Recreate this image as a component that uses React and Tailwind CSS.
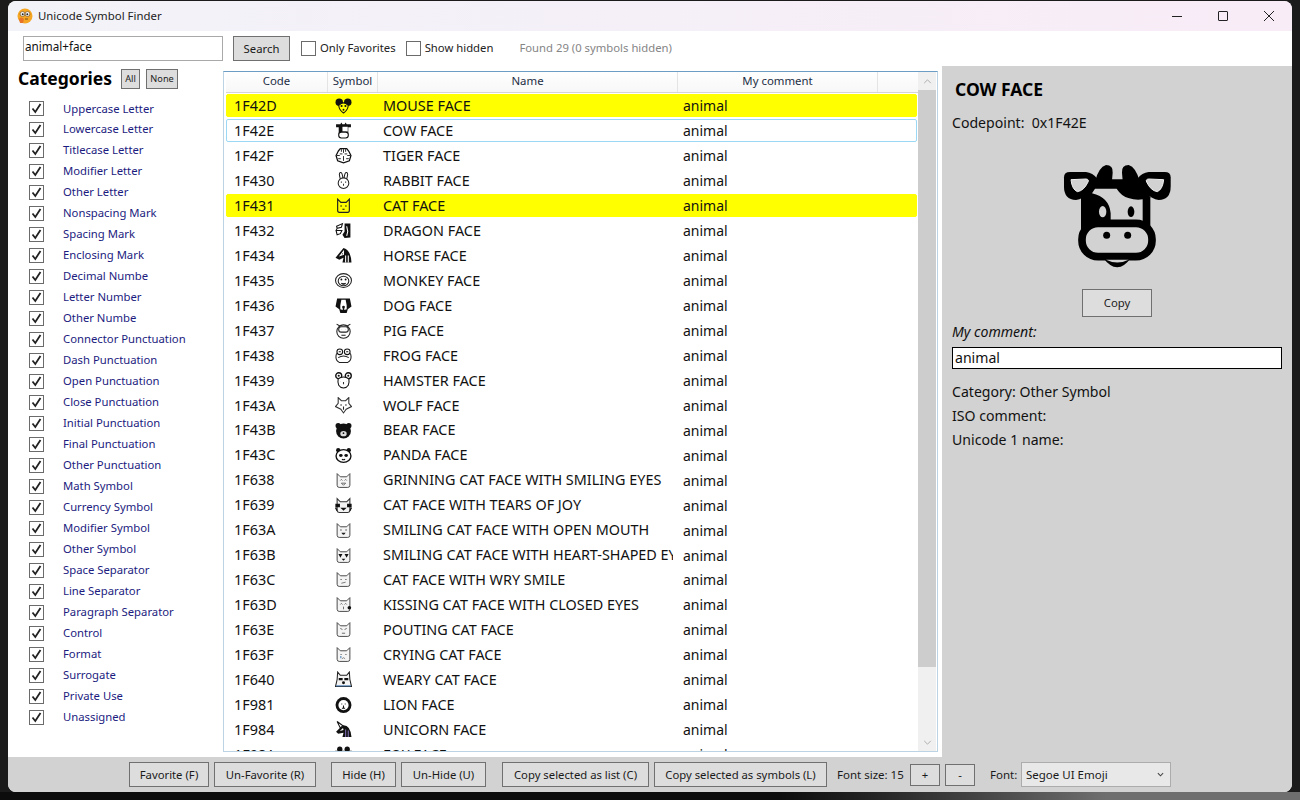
import React from "react";

const UI = { fontFamily: '"Noto Sans", "Open Sans", sans-serif' };

const categories = [
  "Uppercase Letter", "Lowercase Letter", "Titlecase Letter", "Modifier Letter", "Other Letter",
  "Nonspacing Mark", "Spacing Mark", "Enclosing Mark", "Decimal Numbe", "Letter Number", "Other Numbe",
  "Connector Punctuation", "Dash Punctuation", "Open Punctuation", "Close Punctuation", "Initial Punctuation",
  "Final Punctuation", "Other Punctuation", "Math Symbol", "Currency Symbol", "Modifier Symbol", "Other Symbol",
  "Space Separator", "Line Separator", "Paragraph Separator", "Control", "Format", "Surrogate", "Private Use", "Unassigned",
];

const rows = [
  ["1F42D", "MOUSE FACE", "mouse", "hl"],
  ["1F42E", "COW FACE", "cow", "sel"],
  ["1F42F", "TIGER FACE", "tiger"],
  ["1F430", "RABBIT FACE", "rabbit"],
  ["1F431", "CAT FACE", "cat", "hl"],
  ["1F432", "DRAGON FACE", "dragon"],
  ["1F434", "HORSE FACE", "horse"],
  ["1F435", "MONKEY FACE", "monkey"],
  ["1F436", "DOG FACE", "dog"],
  ["1F437", "PIG FACE", "pig"],
  ["1F438", "FROG FACE", "frog"],
  ["1F439", "HAMSTER FACE", "hamster"],
  ["1F43A", "WOLF FACE", "wolf"],
  ["1F43B", "BEAR FACE", "bear"],
  ["1F43C", "PANDA FACE", "panda"],
  ["1F638", "GRINNING CAT FACE WITH SMILING EYES", "catGrin"],
  ["1F639", "CAT FACE WITH TEARS OF JOY", "catJoy"],
  ["1F63A", "SMILING CAT FACE WITH OPEN MOUTH", "catOpen"],
  ["1F63B", "SMILING CAT FACE WITH HEART-SHAPED EYES", "catHeart"],
  ["1F63C", "CAT FACE WITH WRY SMILE", "catWry"],
  ["1F63D", "KISSING CAT FACE WITH CLOSED EYES", "catKiss"],
  ["1F63E", "POUTING CAT FACE", "catPout"],
  ["1F63F", "CRYING CAT FACE", "catCry"],
  ["1F640", "WEARY CAT FACE", "catWeary"],
  ["1F981", "LION FACE", "lion"],
  ["1F984", "UNICORN FACE", "unicorn"],
  ["1F98A", "FOX FACE", "fox"],
];

// outline shared by the 1F638..1F640 cats
const CatBase = () => (
  <path d="M2 1.5 5 4.5H11L14 1.5V12.5Q14 14.5 12 14.5H4Q2 14.5 2 12.5Z" fill="#f4f4f4" stroke="#444" strokeWidth="0.9" />
);

const glyphs = {
  mouse: (
    <>
      <circle cx="4" cy="5" r="3.5" fill="#111" />
      <circle cx="12" cy="5" r="3.5" fill="#111" />
      <path d="M3.5 8Q8 3 12.5 8 12 12.5 8 15 4 12.5 3.5 8Z" fill="#ff0" stroke="#111" />
      <circle cx="6.2" cy="8.5" r="1" fill="#111" />
      <circle cx="9.8" cy="8.5" r="1" fill="#111" />
      <circle cx="8" cy="12" r="0.9" fill="#111" />
    </>
  ),
  cow: (
    <>
      <path d="M1 2H5L6 0.5 7 2H9L10 0.5 11 2H15V5H12.5V13H3.5V5H1Z" fill="#111" />
      <rect x="7" y="4.5" width="5" height="4.5" fill="#fff" />
      <rect x="3.5" y="9.5" width="9" height="5.5" rx="2.5" fill="#fff" stroke="#111" />
      <path d="M6.5 12H6.6M9.5 12H9.6" stroke="#111" />
    </>
  ),
  tiger: (
    <>
      <path d="M3 4 5 1.5H11L13 4 15 8 13.5 13 8 15 2.5 13 1 8Z" fill="#fff" stroke="#111" strokeWidth="1.2" />
      <path d="M6 2V4.5M8 2V5.5M10 2V4.5M1.5 8H4.5M11.5 8H14.5M3 11H5.5M10.5 11H13M8 8.5V13M4.5 6.5H7M9 6.5H11.5" stroke="#222" strokeWidth="0.9" />
    </>
  ),
  rabbit: (
    <>
      <path d="M5.5 8Q3 1 5 0.5T7.5 6.5M10.5 8Q13 1 11 0.5T8.5 6.5" fill="#fff" stroke="#222" />
      <circle cx="8" cy="10.5" r="5" fill="#fff" stroke="#222" />
      <path d="M8 11V13M5.5 9.5H6.5M9.5 9.5H10.5" stroke="#333" />
    </>
  ),
  cat: (
    <>
      <path d="M2.5 2 5.5 5H10.5L13.5 2V12.5Q13.5 14.5 12 14.5H4Q2.5 14.5 2.5 12.5Z" fill="#ff0" stroke="#222" strokeWidth="1.1" />
      <path d="M5 8.5H6.5M9.5 8.5H11M7 11.5H9" stroke="#111" />
    </>
  ),
  dragon: (
    <>
      <path d="M9 1.5H14.5V14.5L9 15 7 12 9 9Z" fill="#111" />
      <path d="M1.5 4 7 1.5 6 5 2 6ZM1 8H6.5L5 11 2 12ZM2 6 1 8" fill="#fff" stroke="#111" />
      <path d="M11 4 12 9 11 13" stroke="#fff" fill="none" />
    </>
  ),
  horse: (
    <>
      <path d="M8 1Q15 3 15.5 14.5H7L8 10 4 12 0.5 10Z" fill="#111" />
      <path d="M8 4 5 8 8 7ZM10 8V14.5M12.5 8V14.5" stroke="#fff" fill="none" />
    </>
  ),
  monkey: (
    <>
      <ellipse cx="8" cy="8" rx="7.5" ry="6.5" fill="#fff" stroke="#222" />
      <ellipse cx="8" cy="8.5" rx="5" ry="4.5" fill="#fff" stroke="#222" />
      <circle cx="6" cy="7" r="0.9" fill="#111" />
      <circle cx="10" cy="7" r="0.9" fill="#111" />
      <path d="M6 10.5Q8 12.5 10 10.5" fill="#111" stroke="#111" />
    </>
  ),
  dog: (
    <>
      <path d="M2 1.5H14L15.5 9 12 11.5 11 15H5L4 11.5 0.5 9Z" fill="#111" />
      <path d="M6 2.5H10L11 8V11.5L8 12.5 5 11.5V8Z" fill="#fff" />
      <circle cx="8" cy="9.5" r="1.3" fill="#111" />
      <path d="M8 10V15" stroke="#111" strokeWidth="1.5" />
    </>
  ),
  pig: (
    <>
      <circle cx="8" cy="9" r="6.3" fill="#fff" stroke="#222" />
      <path d="M1.5 2 5 4M14.5 2 11 4" stroke="#222" />
      <rect x="3.5" y="4.5" width="9" height="5" rx="2.3" fill="#fff" stroke="#222" />
      <path d="M6.5 7H6.6M9.5 7H9.6M6 12.5H10" stroke="#222" />
    </>
  ),
  frog: (
    <>
      <path d="M1.5 6Q-0.5 12 4 14.5H12Q16.5 12 14.5 6" fill="#fff" stroke="#222" />
      <circle cx="4.5" cy="4.5" r="2.7" fill="#fff" stroke="#111" />
      <circle cx="11.5" cy="4.5" r="2.7" fill="#fff" stroke="#111" />
      <path d="M3.5 4.5H5.5M10.5 4.5H12.5" stroke="#111" />
      <path d="M3 10Q8 7 13 10" fill="none" stroke="#222" />
    </>
  ),
  hamster: (
    <>
      <circle cx="3.5" cy="3.5" r="2.8" fill="#fff" stroke="#111" strokeWidth="1.3" />
      <circle cx="12.5" cy="3.5" r="2.8" fill="#fff" stroke="#111" strokeWidth="1.3" />
      <circle cx="3.5" cy="3.5" r="1" fill="#111" />
      <circle cx="12.5" cy="3.5" r="1" fill="#111" />
      <path d="M3 6.5Q1.5 14 8 15 14.5 14 13 6.5Q8 3 3 6.5Z" fill="#fff" stroke="#111" />
      <path d="M8 9.5V11.5M5.5 9H5.6M10.5 9H10.6" stroke="#333" />
    </>
  ),
  wolf: (
    <>
      <path d="M3 0.5 6 3.5H10L13 0.5V6L15.5 9 10.5 11.5 8 15 5.5 11.5 0.5 9 3 6Z" fill="#fff" stroke="#333" />
      <path d="M5 7.5H6.5M9.5 7.5H11M8 9V12" stroke="#222" />
    </>
  ),
  bear: (
    <>
      <circle cx="3" cy="3.5" r="2.5" fill="#111" />
      <circle cx="13" cy="3.5" r="2.5" fill="#111" />
      <circle cx="8" cy="8.5" r="7" fill="#111" />
      <ellipse cx="8" cy="11" rx="3" ry="2.5" fill="#ddd" />
      <circle cx="8" cy="10.5" r="0.8" fill="#111" />
    </>
  ),
  panda: (
    <>
      <circle cx="3" cy="3" r="2" fill="#111" />
      <circle cx="13" cy="3" r="2" fill="#111" />
      <ellipse cx="8" cy="8.5" rx="7" ry="6" fill="#fff" stroke="#111" strokeWidth="1.3" />
      <ellipse cx="5.5" cy="8" rx="1.7" ry="1.4" fill="#111" />
      <ellipse cx="10.5" cy="8" rx="1.7" ry="1.4" fill="#111" />
      <path d="M6.5 11.5Q8 12.5 9.5 11.5" fill="none" stroke="#111" />
    </>
  ),
  catGrin: (
    <>
      <CatBase />
      <path d="M5 8 6 7 7 8M9 8 10 7 11 8M6 10.5H10L8 12.5Z" fill="none" stroke="#555" strokeWidth="0.8" />
    </>
  ),
  catJoy: (
    <>
      <path d="M2 1.5 5 4.5H11L14 1.5V13Q14 14.5 12 14.5H4Q2 14.5 2 13Z" fill="#f4f4f4" stroke="#333" />
      <path d="M1 7H4V9H1ZM12 7H15V9H12ZM0.5 10 2 13M15.5 10 14 13" stroke="#111" strokeWidth="1.3" />
      <path d="M5 10H11L8 13Z" fill="#111" />
    </>
  ),
  catOpen: (
    <>
      <CatBase />
      <path d="M5 7.5H6.2M9.8 7.5H11" stroke="#222" strokeWidth="1.1" />
      <path d="M6 10H10Q8 14 6 10Z" fill="#222" />
    </>
  ),
  catHeart: (
    <>
      <CatBase />
      <path d="M3.2 6.5H7L5.1 10ZM9 6.5H12.8L10.9 10ZM6.2 11H9.8L8 13Z" fill="#111" />
    </>
  ),
  catWry: (
    <>
      <CatBase />
      <path d="M5 8H6.5M9.5 8H11M6 11.5 10 10.5" fill="none" stroke="#666" strokeWidth="0.8" />
    </>
  ),
  catKiss: (
    <>
      <CatBase />
      <path d="M5 8 6 7 7 8M9 8 10 7 11 8M8 10V12.5" fill="none" stroke="#555" strokeWidth="0.8" />
      <circle cx="13.5" cy="11" r="1.7" fill="#111" />
    </>
  ),
  catPout: (
    <>
      <CatBase />
      <path d="M5 7 7 8M11 7 9 8M6.5 11.5H9.5" fill="none" stroke="#555" strokeWidth="0.8" />
    </>
  ),
  catCry: (
    <>
      <CatBase />
      <path d="M5 8H6.5M9.5 8H11M6.5 12 8 11 9.5 12" fill="none" stroke="#777" strokeWidth="0.8" />
      <path d="M5.5 9.5V11.5" stroke="#4a7fb5" strokeWidth="1" />
    </>
  ),
  catWeary: (
    <>
      <path d="M2.5 1 5 4H11L13.5 1 14 8 15.5 14.5H0.5L2 8Z" fill="#f4f4f4" stroke="#222" />
      <path d="M3.5 6.5H7.2V8.8H3.5ZM8.8 6.5H12.5V8.8H8.8Z" fill="#111" />
      <circle cx="8" cy="11" r="1.4" fill="#111" />
      <path d="M1 14H15" stroke="#4a7fb5" strokeWidth="1" />
    </>
  ),
  lion: (
    <>
      <circle cx="8" cy="8.5" r="7.5" fill="#111" />
      <circle cx="8" cy="8.5" r="4.8" fill="#fff" />
      <path d="M6 7.5H6.8M9.2 7.5H10M8 9V11.5M6.5 11.5H9.5" stroke="#111" />
    </>
  ),
  unicorn: (
    <>
      <path d="M8 4Q14.5 4 15.5 15H7L8 11 3 12 1 10 5 6Z" fill="#111" />
      <path d="M2 0.5 7.5 4.5 5 6.5Z" fill="#fff" stroke="#111" />
      <path d="M7.5 6.5 4.5 9.5 8 8.5Z" fill="#fff" />
      <path d="M10 8V15M12.5 9V15" stroke="#7d6bb0" fill="none" />
    </>
  ),
  fox: (
    <>
      <circle cx="4.5" cy="3" r="2.5" fill="#111" />
      <circle cx="11.5" cy="3" r="2.5" fill="#111" />
      <path d="M1 5H15L8 15Z" fill="#fff" stroke="#111" />
    </>
  ),
};

const Glyph = ({ name }) => (
  <svg viewBox="0 0 16 16" className="w-[17px] h-[17px] block" strokeWidth="1">
    {glyphs[name]}
  </svg>
);

const CheckBox = ({ checked }) => (
  <div className="w-[15px] h-[15px] bg-white border border-[#6b6b6b] flex items-center justify-center shrink-0">
    {checked && (
      <svg viewBox="0 0 13 13" className="w-[13px] h-[13px]">
        <path d="M2.5 6.5 5.3 10 10.5 2" fill="none" stroke="#222" strokeWidth="1.8" />
      </svg>
    )}
  </div>
);

const BarButton = ({ children, className }) => (
  <button className={`h-[25px] pt-px bg-[#dddddd] border border-[#707070] text-[11.3px] text-[#1a1a1a] flex items-center justify-center ${className}`}>
    {children}
  </button>
);

const CowIcon = () => (
  <svg viewBox="0 0 345 345" className="w-[115px] h-[115px] block">
    {/* horns */}
    <path d="M106 62Q116 22 138 15 160 15 158 38L156 62ZM238 62Q228 22 206 15 184 15 186 38L188 62Z" fill="#000" />
    {/* ears */}
    <path d="M12 52Q12 36 30 36H78Q98 38 112 56 90 112 48 120 12 118 12 80Z" fill="#000" />
    <path d="M332 52Q332 36 314 36H266Q246 38 232 56 254 112 296 120 332 118 332 80Z" fill="#000" />
    <path d="M33 59 78 57Q88 58 84 66 72 92 52 95 36 88 33 59Z" fill="#d2d2d2" stroke="#efefef" strokeWidth="3" />
    <path d="M311 59 266 57Q256 58 260 66 272 92 292 95 308 88 311 59Z" fill="#d2d2d2" stroke="#efefef" strokeWidth="3" />
    {/* head */}
    <path d="M63 112 108 58H237L271 112V212H63Z" fill="#000" />
    <path d="M105 86H170Q184 108 205 114 228 122 248 118V195H152V160Q148 112 96 100Z" fill="#d2d2d2" />
    {/* eyes */}
    <ellipse cx="128" cy="155" rx="11" ry="17" fill="#d2d2d2" />
    <ellipse cx="213" cy="155" rx="10" ry="16" fill="#000" />
    {/* muzzle */}
    <path d="M128 292Q172 352 214 292Z" fill="#000" />
    <rect x="66" y="190" width="210" height="100" rx="48" fill="#d2d2d2" stroke="#000" strokeWidth="23" />
    <path d="M138 299H206Q172 316 138 299Z" fill="#d2d2d2" />
    <circle cx="140" cy="226" r="10.5" fill="#000" />
    <circle cx="203" cy="226" r="10.5" fill="#000" />
  </svg>
);

const AppIcon = () => (
  <svg viewBox="0 0 16 16" className="w-[16px] h-[16px] block">
    <circle cx="8" cy="8" r="7.5" fill="#f5a623" />
    <circle cx="5.5" cy="6" r="2.4" fill="#fff" stroke="#5a3a10" strokeWidth="0.6" />
    <circle cx="10.5" cy="6" r="2.4" fill="#fff" stroke="#5a3a10" strokeWidth="0.6" />
    <circle cx="5.7" cy="6.2" r="1" fill="#222" />
    <circle cx="10.3" cy="6.2" r="1" fill="#222" />
    <path d="M2 11Q4 8 7 11L6 15H3Z" fill="#e8742a" />
    <path d="M8 11H11" stroke="#5a3a10" strokeWidth="0.8" />
  </svg>
);

export default function App() {
  return (
    <div className="w-[1300px] h-[800px] overflow-hidden flex flex-col bg-[#1b1b1b]" style={UI}>
      <div className="h-[792px] pt-px px-2 flex">
        <div className="flex-1 flex flex-col rounded-lg overflow-hidden bg-white">
          {/* title bar */}
          <div className="h-[30px] shrink-0 flex items-center bg-gradient-to-r from-[#f2f3f8] to-[#f8ecf7]">
            <div className="ml-[9px] mr-[5px]"><AppIcon /></div>
            <span className="text-[11.4px] text-[#222]">Unicode Symbol Finder</span>
            <div className="ml-auto flex items-center">
              <div className="w-[46px] flex justify-center"><div className="w-[10px] h-px bg-[#222]" /></div>
              <div className="w-[46px] flex justify-center"><div className="w-[10px] h-[10px] border border-[#222] rounded-[1px]" /></div>
              <div className="w-[46px] flex justify-center">
                <svg viewBox="0 0 10 10" className="w-[10px] h-[10px]"><path d="M0 0 10 10M10 0 0 10" stroke="#222" strokeWidth="1" /></svg>
              </div>
            </div>
          </div>

          {/* search row */}
          <div className="h-[35px] shrink-0 flex items-start pt-[5px] pl-[15px]">
            <div className="w-[200px] h-[25px] border border-[#a9a9a9] bg-white pl-px text-[11.7px] leading-[18px] text-[#111]">animal+face</div>
            <BarButton className="w-[57px] ml-[10px]">Search</BarButton>
            <div className="h-[25px] flex items-center ml-[11px] text-[11.3px] text-[#222]">
              <CheckBox />
              <span className="ml-[4px]">Only Favorites</span>
              <div className="ml-[10px]"><CheckBox /></div>
              <span className="ml-[4px]">Show hidden</span>
              <span className="ml-[26px] text-[#858585]">Found 29 (0 symbols hidden)</span>
            </div>
          </div>

          <div className="flex-1 flex min-h-0">
            {/* categories */}
            <div className="w-[215px] shrink-0">
              <div className="h-[32.5px] flex items-start pl-[10px] pt-[3px]">
                <span className="text-[17.5px] font-bold text-black leading-[18px]">Categories</span>
                <button className="w-[19px] h-[20px] ml-[9px] bg-[#dddddd] border border-[#707070] text-[9.2px] text-[#222]">All</button>
                <button className="w-[32px] h-[20px] ml-[6px] bg-[#dddddd] border border-[#707070] text-[9.2px] text-[#222]">None</button>
              </div>
              {categories.map((c) => (
                <div key={c} className="h-[20.97px] flex items-center pl-[21px]">
                  <CheckBox checked />
                  <span className="ml-[19px] text-[11.3px] text-[#1c1c80]">{c}</span>
                </div>
              ))}
            </div>

            {/* list */}
            <div className="flex-1 mt-[5px] mb-[5px] mr-[4px] flex border border-[#bcd3e3] border-t-[#6e9dc4] bg-white overflow-hidden">
              <div className="flex-1 min-w-0 flex flex-col">
                <div className="h-[21px] shrink-0 flex text-[11.4px] text-[#1e2e45] bg-gradient-to-b from-white to-[#f7f7f7] border-b border-[#d5d5d5] ml-[2px]">
                  <div className="w-[102px] text-center border-r border-[#e4e4e4]">Code</div>
                  <div className="w-[50px] text-center border-r border-[#e4e4e4]">Symbol</div>
                  <div className="w-[300px] text-center border-r border-[#e4e4e4]">Name</div>
                  <div className="w-[200px] text-center border-r border-[#e4e4e4]">My comment</div>
                </div>
                <div className="flex-1 min-h-0 overflow-hidden ml-[2px] mr-px pt-[0.4px]">
                  {rows.map(([code, name, glyph, state]) => (
                    <div key={code} className="h-[24.96px] flex items-center">
                      <div className={`w-full h-[23px] flex items-center rounded-[2px] border text-[14.4px] text-[#111] ${state === "hl" ? "bg-[#ffff00] border-[#ffff00]" : state === "sel" ? "border-[#9ad8f5]" : "border-transparent"}`}>
                        <div className="w-[101px] pl-[7px] shrink-0">{code}</div>
                        <div className="w-[50px] pl-[7px] shrink-0"><Glyph name={glyph} /></div>
                        <div className="w-[295px] mr-[5px] pl-[5px] shrink-0 overflow-hidden whitespace-nowrap">{name}</div>
                        <div className="pl-[5px] text-[14px]">animal</div>
                      </div>
                    </div>
                  ))}
                </div>
              </div>
              {/* scrollbar */}
              <div className="w-[18px] mr-px shrink-0 flex flex-col bg-[#f0f0f0]">
                <div className="h-[18px] flex items-center justify-center">
                  <svg viewBox="0 0 10 6" className="w-[9px] h-[5px]"><path d="M1 5 5 1 9 5" fill="none" stroke="#a8a8a8" strokeWidth="1.1" /></svg>
                </div>
                <div className="h-[577px] bg-[#cdcdcd]" />
                <div className="flex-1 flex items-end justify-center pb-[6px]">
                  <svg viewBox="0 0 10 6" className="w-[9px] h-[5px]"><path d="M1 1 5 5 9 1" fill="none" stroke="#a8a8a8" strokeWidth="1.1" /></svg>
                </div>
              </div>
            </div>

            {/* details */}
            <div className="w-[350px] shrink-0 bg-[#d2d2d2] pl-[10px] text-[14.1px] text-[#111]">
              <div className="h-[46px] flex items-center pl-[3px] pt-[1px] text-[17.5px] font-bold text-black">COW FACE</div>
              <div className="h-[22px] flex items-center">Codepoint:&nbsp; 0x1F42E</div>
              <div className="w-[330px] flex justify-center mt-[26px]"><CowIcon /></div>
              <div className="w-[330px] flex justify-center mt-[14px]">
                <button className="w-[70px] h-[28px] bg-[#dddddd] border border-[#707070] text-[11.3px] text-[#222]">Copy</button>
              </div>
              <div className="h-[22px] flex items-center mt-[4px] italic">My comment:</div>
              <div className="w-[330px] h-[22px] mt-[4px] bg-white border border-black px-[2px] flex items-center">animal</div>
              <div className="h-[24px] flex items-center mt-[11px]">Category: Other Symbol</div>
              <div className="h-[24px] flex items-center">ISO comment:</div>
              <div className="h-[24px] flex items-center">Unicode 1 name:</div>
            </div>
          </div>

          {/* bottom bar */}
          <div className="h-[35px] shrink-0 bg-[#d2d2d2] flex items-center text-[11.5px] text-[#1a1a1a]">
            <BarButton className="w-[80px] ml-[121px]">Favorite (F)</BarButton>
            <BarButton className="w-[102px] ml-[5px]">Un-Favorite (R)</BarButton>
            <BarButton className="w-[65px] ml-[15px]">Hide (H)</BarButton>
            <BarButton className="w-[85px] ml-[5px]">Un-Hide (U)</BarButton>
            <BarButton className="w-[147px] ml-[16px]">Copy selected as list (C)</BarButton>
            <BarButton className="w-[173px] ml-[5px]">Copy selected as symbols (L)</BarButton>
            <span className="ml-[10px] w-[66px] whitespace-nowrap">Font size: 15</span>
            <BarButton className="w-[30px] !h-[22px] ml-[7px]">+</BarButton>
            <BarButton className="w-[30px] !h-[22px] ml-[5px]">-</BarButton>
            <span className="ml-[15px] w-[31px]">Font:</span>
            <div className="w-[150px] h-[25px] bg-[#e8e8e8] border border-[#acacac] flex items-center pl-[4px] pr-[6px]">
              <span>Segoe UI Emoji</span>
              <svg viewBox="0 0 8 5" className="w-[7px] h-[5px] ml-auto"><path d="M1 1 4 4 7 1" fill="none" stroke="#444" strokeWidth="1.2" /></svg>
            </div>
          </div>
        </div>
      </div>
      <div className="flex-1 bg-gradient-to-r from-[#0c0c0c] from-[60%] to-[#6e6e6e] to-[85%]" />
    </div>
  );
}
